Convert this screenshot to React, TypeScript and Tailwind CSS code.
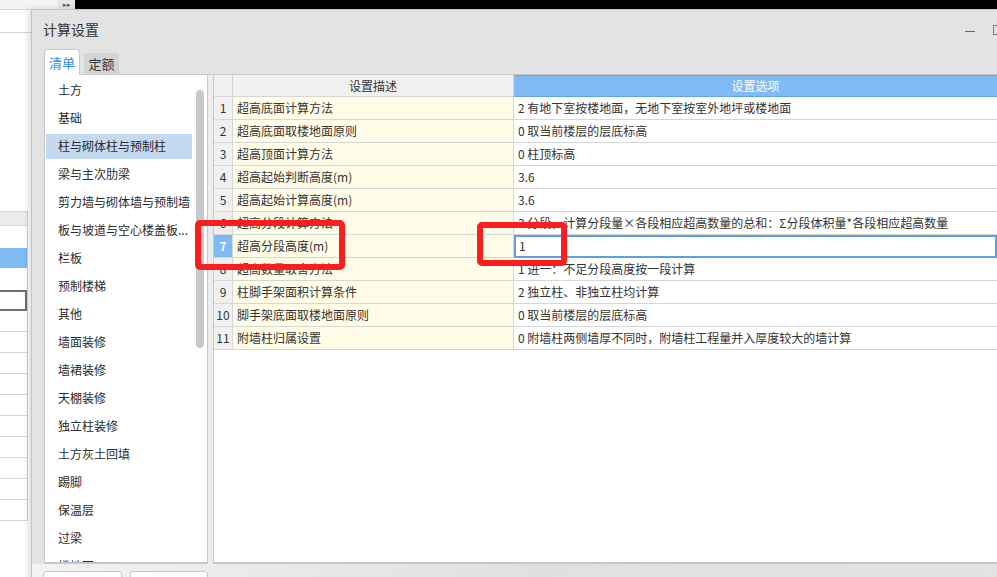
import React from 'react'

const categories = [
  '土方',
  '基础',
  '柱与砌体柱与预制柱',
  '梁与主次肋梁',
  '剪力墙与砌体墙与预制墙',
  '板与坡道与空心楼盖板...',
  '栏板',
  '预制楼梯',
  '其他',
  '墙面装修',
  '墙裙装修',
  '天棚装修',
  '独立柱装修',
  '土方灰土回填',
  '踢脚',
  '保温层',
  '过梁',
  '楼地面',
]

const rows = [
  { desc: '超高底面计算方法', value: '2 有地下室按楼地面，无地下室按室外地坪或楼地面' },
  { desc: '超高底面取楼地面原则', value: '0 取当前楼层的层底标高' },
  { desc: '超高顶面计算方法', value: '0 柱顶标高' },
  { desc: '超高起始判断高度(m)', value: '3.6' },
  { desc: '超高起始计算高度(m)', value: '3.6' },
  { desc: '超高分段计算方法', value: '3 分段，计算分段量×各段相应超高数量的总和：Σ分段体积量*各段相应超高数量' },
  { desc: '超高分段高度(m)', value: '1' },
  { desc: '超高数量取舍方法', value: '1 进一：不足分段高度按一段计算' },
  { desc: '柱脚手架面积计算条件', value: '2 独立柱、非独立柱均计算' },
  { desc: '脚手架底面取楼地面原则', value: '0 取当前楼层的层底标高' },
  { desc: '附墙柱归属设置', value: '0 附墙柱两侧墙厚不同时，附墙柱工程量并入厚度较大的墙计算' },
]

const font = { fontFamily: '"Noto Sans CJK SC", "Noto Sans", sans-serif' }

function BackgroundApp() {
  // the main window behind the dialog, only its left strip shows
  return (
    <div className="flex h-full w-full flex-col bg-white">
      <div className="flex h-[9px] shrink-0">
        <div className="w-[58px] bg-[#f3f3f3]" />
        <div className="flex w-[17px] items-center justify-center bg-[#e6e6e6] text-[7px] leading-none text-[#555]">▸▸</div>
        <div className="flex-1 bg-black" />
      </div>
      <div className="h-[24px] w-[32px] border-y border-[#d6d6d6]" />
      <div className="h-[178px]" />
      <div className="flex w-[28px] flex-col border-r border-[#d0d0d0]">
        <div className="h-[15px] border-y border-[#d6d6d6] bg-[#ececec]" />
        <div className="h-[22px]" />
        <div className="h-[20px] bg-[#7fbaf5]" />
        <div className="h-[22px]" />
        <div className="h-[21px] border-2 border-l-0 border-[#707070]" />
        {Array.from({ length: 10 }).map((_, i) => (
          <div key={i} className="h-[21px] border-b border-[#d8d8d8]" />
        ))}
      </div>
    </div>
  )
}

function CategoryList() {
  return (
    <div className="relative flex h-full w-[164px] shrink-0 border-x border-b-2 border-[#c8c8c8] bg-white">
      <div className="flex w-[150px] flex-col overflow-hidden pt-[1px]">
        {categories.map((c, i) => (
          <div key={c} className="flex h-[28px] shrink-0 items-center">
            <div
              className={
                'ml-[1px] flex h-[25px] w-[146px] items-center pl-[12px] text-[12px] text-[#2b2b2b] ' +
                (i === 2 ? 'bg-[#c4daf0]' : '')
              }
            >
              <span className="whitespace-nowrap">{c}</span>
            </div>
          </div>
        ))}
      </div>
      <div className="ml-[1px] w-[8px] pt-[15px]">
        <div className="h-[258px] w-[8px] rounded-full bg-[#c9c9c9]" />
      </div>
    </div>
  )
}

function SettingsTable() {
  return (
    <div className="h-full flex-1 border-x border-b-2 border-[#c8c8c8] bg-white">
      <div className="grid grid-cols-[19px_281px_483px] text-[12px] text-[#333]">
        <div className="h-[22px] border-r border-b border-[#d6d6d6] bg-[#f0f0f0]" />
        <div className="flex h-[22px] items-center justify-center border-r border-b border-[#d6d6d6] bg-[#f0f0f0]">设置描述</div>
        <div className="flex h-[22px] items-center justify-center border-t border-b border-[#5fa5ee] bg-[#80bbf6] text-white">设置选项</div>
        {rows.map((r, i) => {
          const active = i === 6
          return (
            <React.Fragment key={r.desc}>
              <div
                className={
                  'flex h-[23px] items-center justify-center border-r border-b border-[#d6d6d6] ' +
                  (active ? 'bg-[#7fbaf5] font-bold text-white' : 'bg-[#f0f0f0]')
                }
              >
                {i + 1}
              </div>
              <div className="flex h-[23px] items-center border-r border-b border-[#d6d6d6] bg-[#fffde8] pl-[4px] whitespace-nowrap">
                {r.desc}
              </div>
              {active ? (
                <div className="flex h-[23px] items-center border-b border-[#d6d6d6]">
                  <div className="flex h-[23px] w-full items-center border-2 border-[#5d9fe4] pl-[3px]">{r.value}</div>
                </div>
              ) : (
                <div className="flex h-[23px] items-center border-b border-[#d6d6d6] pl-[4px] whitespace-nowrap">
                  {r.value}
                </div>
              )}
            </React.Fragment>
          )
        })}
      </div>
    </div>
  )
}

function Dialog() {
  return (
    <div className="absolute top-[9px] left-[31px] flex h-[600px] w-[1010px] flex-col border border-[#c4c4c4] bg-[#e3e3e3] shadow-[-3px_0_6px_rgba(0,0,0,0.12)]">
      {/* title bar */}
      <div className="flex h-[39px] shrink-0 items-center pl-[11px]">
        <span className="-mt-[1px] text-[14px] text-[#333]">计算设置</span>
        <div className="mr-[37px] ml-auto flex items-center gap-[18px]">
          <div className="mt-[3px] h-[1px] w-[10px] bg-[#666]" />
          <div className="h-[10px] w-[10px] border border-[#777]" />
        </div>
      </div>

      {/* tabs */}
      <div className="relative z-10 flex h-[25px] shrink-0 items-end gap-[4px] pl-[12px]">
        <div className="-mb-[1px] flex h-[26px] w-[36px] items-center justify-center rounded-t-[3px] border border-b-0 border-[#c8c8c8] bg-white text-[13px] text-[#2f8ae5]">
          清单
        </div>
        <div className="flex h-[21px] w-[35px] items-center justify-center rounded-t-[2px] bg-[#d4d4d4] text-[13px] text-[#333]">
          定额
        </div>
      </div>

      {/* content */}
      <div className="flex h-[490px] shrink-0 pl-[12px]">
        <div className="flex h-full w-full border-t border-[#c8c8c8]">
          <CategoryList />
          <div className="w-[5px] shrink-0 bg-[#ececec]" />
          <SettingsTable />
        </div>
      </div>

      {/* bottom buttons */}
      <div className="flex gap-[8px] bg-gradient-to-r from-[#f2f2f2] via-[#e0e0e0] to-[#e3e3e3] pt-[7px] pl-[11px]">
        <div className="h-[28px] w-[79px] rounded-[3px] border border-[#c8c8c8] bg-white" />
        <div className="h-[28px] w-[78px] rounded-[3px] border border-[#c8c8c8] bg-white" />
      </div>
    </div>
  )
}

export default function App() {
  return (
    <div className="relative h-[577px] w-[997px] overflow-hidden bg-white" style={font}>
      <BackgroundApp />
      <Dialog />

      {/* red highlight marks */}
      <div className="absolute top-[220px] left-[195px] h-[50px] w-[150px] rounded-[5px] border-[6px] border-[#fb1e1e]" />
      <div className="absolute top-[222px] left-[477px] h-[44px] w-[90px] rounded-[5px] border-[6px] border-[#fb1e1e]" />
    </div>
  )
}
